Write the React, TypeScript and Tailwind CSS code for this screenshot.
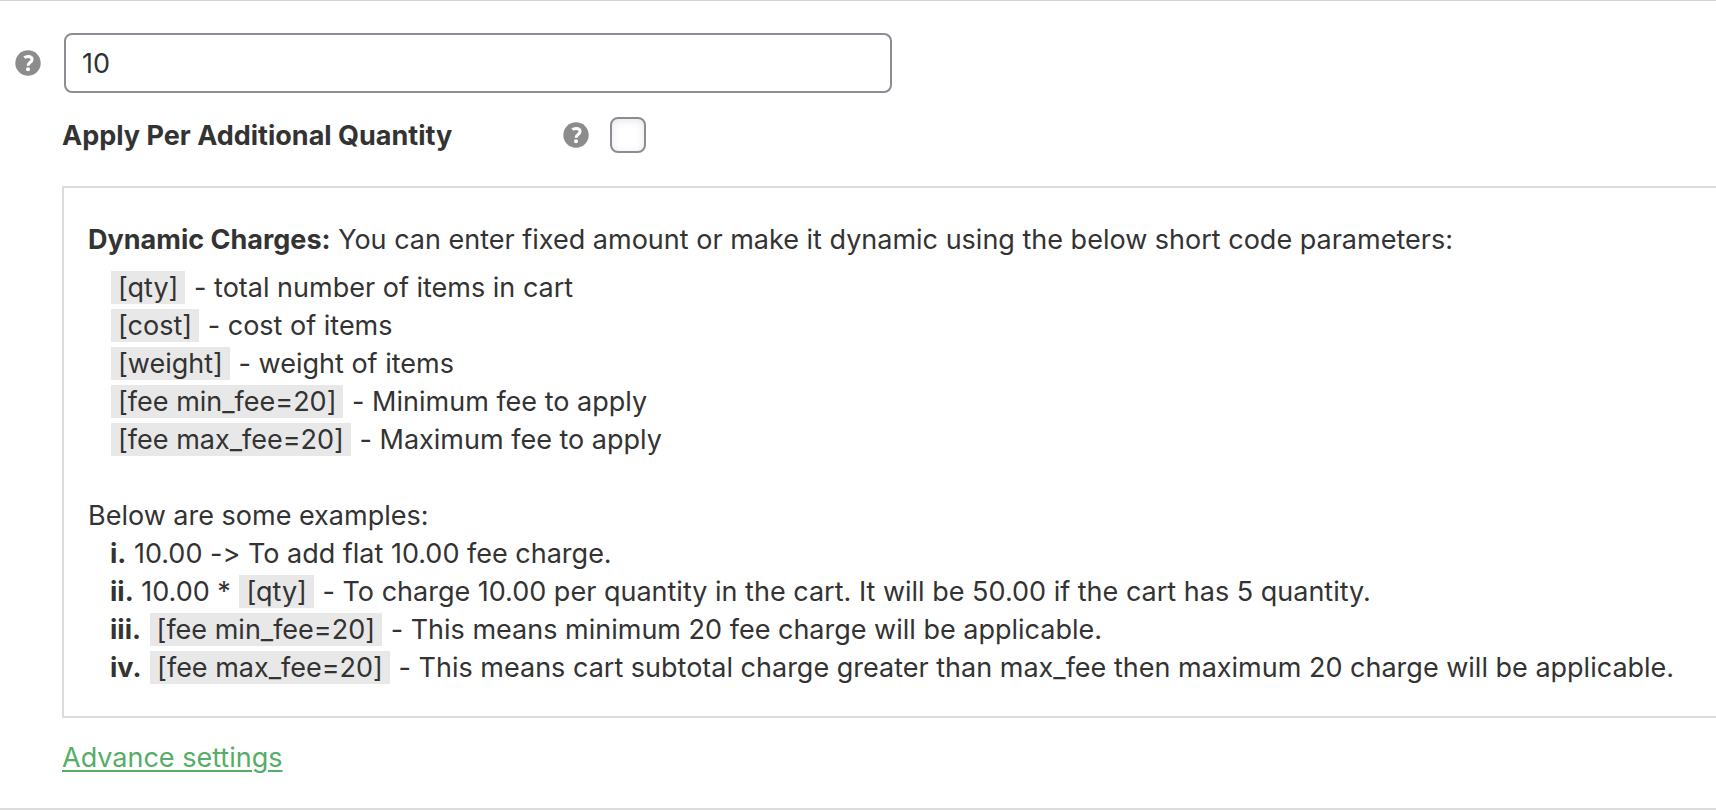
import { useState } from "react";
import type { ReactNode } from "react";

function HelpIcon({ label }: { label: string }) {
  return (
    <button type="button" aria-label={label} className="size-[26px] shrink-0">
      <svg viewBox="0 0 26 26" className="size-full" aria-hidden="true">
        <circle cx="13" cy="13" r="12.7" fill="#8c8c8c" />
        <path
          d="M9.3 7.6C10.3 6.8 11.5 6.4 13.1 6.4C15.6 6.4 17.1 7.5 17.1 9.4C17.1 12.3 13 12.2 13 15.8"
          fill="none"
          stroke="#fff"
          strokeWidth="3"
        />
        <circle cx="13" cy="19.3" r="2" fill="#fff" />
      </svg>
    </button>
  );
}

function Code({ children }: { children: ReactNode }) {
  return <code className="mx-px bg-[#e8e8e8] px-[7px] font-[Inter,sans-serif]">{children}</code>;
}

const parameters = [
  { code: "[qty]", text: "total number of items in cart" },
  { code: "[cost]", text: "cost of items" },
  { code: "[weight]", text: "weight of items" },
  { code: "[fee min_fee=20]", text: "Minimum fee to apply" },
  { code: "[fee max_fee=20]", text: "Maximum fee to apply" },
];

export default function App() {
  const [amount, setAmount] = useState("10");
  const [perQuantity, setPerQuantity] = useState(false);

  return (
    <main className="overflow-hidden border-t border-b-2 border-t-[#d5d5d5] border-b-[#dcdcdc] bg-white pt-8 pb-[31px] font-[Inter,sans-serif] text-[27px] leading-[38px] text-[#333] [font-variant-ligatures:no-contextual]">
      <div className="flex items-center gap-[23px] pl-[15px]">
        <HelpIcon label="Help: charge amount" />
        <input
          type="text"
          aria-label="Charge amount"
          value={amount}
          onChange={(e) => setAmount(e.target.value)}
          className="h-[60px] w-full max-w-[828px] rounded-lg border-2 border-[#8c8c94] px-4 text-[#2c3338] outline-none"
        />
      </div>

      <div className="mt-6 ml-[62px] flex h-9 items-center">
        <label htmlFor="per-quantity" className="w-[501px] pt-0.5 font-bold">
          Apply Per Additional Quantity
        </label>
        <HelpIcon label="Help: apply per additional quantity" />
        <input
          id="per-quantity"
          type="checkbox"
          checked={perQuantity}
          onChange={(e) => setPerQuantity(e.target.checked)}
          className="ml-[21px] size-9 appearance-none rounded-lg border-2 border-[#8c8c94] bg-white shadow-[inset_0_2px_8px_rgba(0,0,0,0.1)] checked:bg-[#55ad67]"
        />
      </div>

      <section className="mt-[33px] ml-[62px] border-2 border-r-0 border-[#dcdcdc] pt-[33px] pb-[29px] pl-6 whitespace-nowrap">
        <p>
          <strong className="font-bold">Dynamic Charges:</strong> You can enter fixed amount or make it dynamic using
          the below short code parameters:
        </p>
        <ul className="mt-[10px] pl-[22px]">
          {parameters.map((p) => (
            <li key={p.code}>
              <Code>{p.code}</Code> - {p.text}
            </li>
          ))}
        </ul>
        <p className="mt-[38px]">Below are some examples:</p>
        <ul className="pl-[22px]">
          <li>
            <b className="font-bold">i.</b> 10.00 -&gt; To add flat 10.00 fee charge.
          </li>
          <li>
            <b className="font-bold">ii.</b> 10.00 * <Code>[qty]</Code> - To charge 10.00 per quantity in the cart. It
            will be 50.00 if the cart has 5 quantity.
          </li>
          <li>
            <b className="font-bold">iii.</b> <Code>[fee min_fee=20]</Code> - This means minimum 20 fee charge will be
            applicable.
          </li>
          <li>
            <b className="font-bold">iv.</b> <Code>[fee max_fee=20]</Code> - This means cart subtotal charge greater
            than max_fee then maximum 20 charge will be applicable.
          </li>
        </ul>
      </section>

      <a href="#advance" className="mt-[21px] ml-[62px] inline-block text-[#55ad67] underline decoration-2 underline-offset-3">
        Advance settings
      </a>
    </main>
  );
}
